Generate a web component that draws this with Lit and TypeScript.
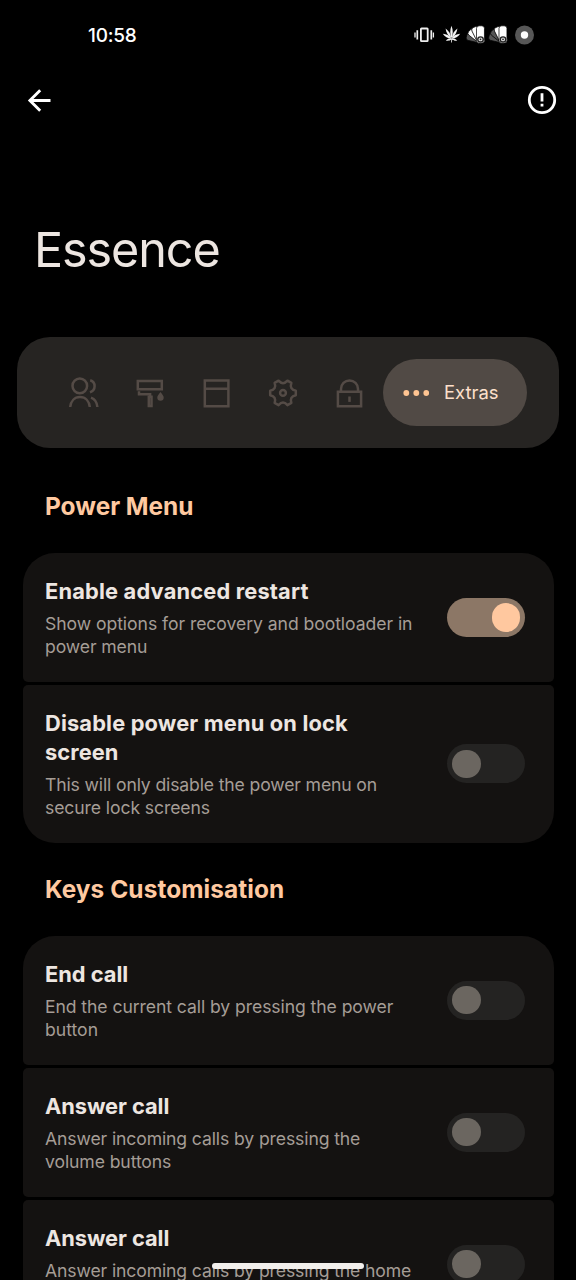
import { LitElement, html, css, svg, nothing } from "lit";
import { customElement, property } from "lit/decorators.js";

interface Line {
  text: string;
  track?: number;
}
interface Setting {
  title: Line[];
  summary: Line[];
  on?: boolean;
}
interface Section {
  heading: Line;
  items: Setting[];
}

const SECTIONS: Section[] = [
  {
    heading: { text: "Power Menu" },
    items: [
      {
        title: [{ text: "Enable advanced restart", track: 0.19 }],
        summary: [{ text: "Show options for recovery and bootloader in", track: -0.06 }, { text: "power menu", track: -0.1 }],
        on: true,
      },
      {
        title: [{ text: "Disable power menu on lock", track: 0.17 }, { text: "screen", track: 0.1 }],
        summary: [
          { text: "This will only disable the power menu on", track: -0.14 },
          { text: "secure lock screens", track: -0.1 },
        ],
      },
    ],
  },
  {
    heading: { text: "Keys Customisation", track: 0.09 },
    items: [
      {
        title: [{ text: "End call" }],
        summary: [{ text: "End the current call by pressing the power", track: -0.08 }, { text: "button" }],
      },
      {
        title: [{ text: "Answer call", track: -0.05 }],
        summary: [{ text: "Answer incoming calls by pressing the", track: -0.12 }, { text: "volume buttons", track: -0.1 }],
      },
      {
        title: [{ text: "Answer call", track: -0.05 }],
        summary: [{ text: "Answer incoming calls by pressing the home", track: -0.12 }],
      },
    ],
  },
];

const lines = (list: Line[]) =>
  list.map((l) => html`<div style="letter-spacing:${l.track ?? 0}px">${l.text}</div>`);

@customElement("toggle-switch")
export class ToggleSwitch extends LitElement {
  @property({ type: Boolean, reflect: true }) on = false;
  static styles = css`
    :host {
      display: flex;
      flex: none;
      align-items: center;
      box-sizing: border-box;
      width: 78px;
      height: 39px;
      padding: 0 5.2px;
      border-radius: 20px;
      background: #242322;
    }
    .thumb {
      width: 28.5px;
      height: 28.5px;
      border-radius: 50%;
      background: #6b6660;
    }
    :host([on]) {
      justify-content: flex-end;
      background: #8c7766;
    }
    :host([on]) .thumb {
      background: #ffc89f;
    }
  `;
  render() {
    return html`<div class="thumb"></div>`;
  }
}

@customElement("setting-card")
export class SettingCard extends LitElement {
  @property({ attribute: false }) item!: Setting;
  static styles = css`
    :host {
      display: flex;
      align-items: center;
      justify-content: space-between;
      padding: 24px 28.3px 24px 22.5px;
      background: #141211;
      white-space: nowrap;
    }
    .title {
      font-size: 21.8px;
      font-weight: 700;
      line-height: 28.5px;
      color: #ede6e1;
    }
    .summary {
      min-height: 46px;
      margin-top: 6.5px;
      font-size: 17.6px;
      line-height: 23px;
      color: #a59d96;
    }
  `;
  render() {
    return html`
      <div>
        <div class="title">${lines(this.item.title)}</div>
        <div class="summary">${lines(this.item.summary)}</div>
      </div>
      <toggle-switch ?on=${!!this.item.on}></toggle-switch>
    `;
  }
}

const blade = (angle: number, fill: string) => svg`
  <rect x="11.500" y="0" width="7.500" height="17.300" rx="2.600" fill=${fill} transform="rotate(${angle} 15.300 13.600)"/>`;

const swatchFan = (darkBlades: number) => svg`
  <g stroke="#000" stroke-width=".7">
    ${blade(-76, "#555")}
    ${blade(-50, darkBlades > 1 ? "#555" : "#fff")}
    ${blade(-25, "#fff")}
    ${blade(0, "#fff")}
  </g>
  <circle cx="15.300" cy="13.600" r="2.600" fill="#ddd" stroke="#222" stroke-width="1.300"/>
  <circle cx="15.300" cy="13.600" r="0.800" fill="#222"/>`;

const polar = (deg: number, r: number) => {
  const a = (deg * Math.PI) / 180;
  return `${(16 + r * Math.cos(a)).toFixed(2)} ${(16.9 + r * Math.sin(a)).toFixed(2)}`;
};
const GEAR =
  `M${polar(-10, 13)}` +
  [0, 60, 120, 180, 240, 300]
    .map((a) => `L${polar(a + 10, 13)}Q${polar(a + 30, 7.2)} ${polar(a + 50, 13)}`)
    .join("") +
  "z";

const TAB_ICONS = [
  svg`<circle cx="11.800" cy="9.900" r="7.300"/>
      <path d="M2.200 31C2.800 25 6.600 21 12 21s9.200 4 9.800 10"/>
      <path d="M22.200 4.200C25.200 5 26.600 7.400 26.600 10.200s-1.400 4.900-4.600 6.100"/>
      <path d="M23 21.600C26.800 23 29 26.400 29.400 31"/>`,
  svg`<path d="M3.800 5.100h24v8.200h-24z"/>
      <path d="M5 15.300v2.900H16.100V21"/>
      <path d="M14.800 20.800h2.700v9.200h-2.700z"/>
      <path d="M26.500 16c2 2.600 3.200 4 3.200 5.500a3.200 3.200 0 0 1-6.400 0c0-1.500 1.200-2.900 3.200-5.500z" fill="currentColor" stroke="none"/>`,
  svg`<path d="M3.800 4.600h23.600v25.600H3.800zM3.800 12.800h23.600"/>`,
  svg`<path stroke-linejoin="round" d=${GEAR}/>
      <circle cx="16" cy="16.900" r="2.900"/>`,
  svg`<path d="M3.900 15.800h23.200v14.400H3.900zM7 15.800V12.900a8.500 8.500 0 0 1 17 0v2.900"/>
      <path d="M15.500 20.500v5.400"/>`,
];

@customElement("app-root")
export class AppRoot extends LitElement {
  static styles = css`
    :host {
      display: block;
      position: relative;
      box-sizing: border-box;
      height: 1280px;
      overflow: hidden;
      background: #000;
      color: #ede6e1;
      font-family: Inter, "Open Sans", sans-serif;
    }
    svg {
      display: block;
      flex: none;
    }
    .status {
      display: flex;
      align-items: center;
      justify-content: space-between;
      height: 70px;
      padding: 0 42px 0 88px;
      color: #fff;
    }
    .clock {
      font-size: 19px;
      font-weight: 500;
      letter-spacing: -0.2px;
    }
    .bar {
      display: flex;
      align-items: center;
      justify-content: space-between;
      height: 60px;
      padding: 0 18px 0 25px;
    }
    h1 {
      margin: 0;
      padding: 90px 0 0 34px;
      font-size: 48.5px;
      font-weight: 400;
      line-height: 60px;
      letter-spacing: -1.1px;
    }
    .tabs {
      display: flex;
      align-items: center;
      box-sizing: border-box;
      height: 111px;
      margin: 57px 17px 0;
      padding: 0 32px 0 33.5px;
      border-radius: 33px;
      background: #262422;
      color: #544b46;
    }
    .tab {
      display: flex;
      justify-content: center;
      width: 66.5px;
    }
    .pill {
      display: flex;
      flex: 1;
      align-items: center;
      gap: 15px;
      height: 66.5px;
      padding-left: 20px;
      border-radius: 33.5px;
      background: #514a45;
      color: #fde0cb;
      font-size: 18.4px;
    }
    .label {
      margin-top: -2px;
    }
    h2 {
      margin: 0;
      height: 105px;
      padding-left: 45px;
      font-size: 24.4px;
      font-weight: 700;
      line-height: 117px;
      color: #ffc9a0;
    }
    .gap {
      height: 93px;
      line-height: 93px;
    }
    .group {
      display: flex;
      flex-direction: column;
      gap: 3px;
      padding: 0 22.5px;
    }
    setting-card {
      border-radius: 5px;
    }
    setting-card:first-child {
      border-top-left-radius: 32px;
      border-top-right-radius: 32px;
    }
    .closed setting-card:last-child {
      border-bottom-left-radius: 32px;
      border-bottom-right-radius: 32px;
    }
    .nav {
      position: absolute;
      left: 212px;
      top: 1263px;
      width: 152px;
      height: 6px;
      border-radius: 3px;
      background: #f2efec;
    }
  `;

  render() {
    return html`
      <div class="status">
        <span class="clock">10:58</span>
        <svg width="122" height="22" viewBox="0 0 122 22" fill="none">
          <g stroke="#eee">
            <rect x="8.900" y="4.500" width="6.800" height="12.600" rx="0.600" stroke-width="1.800"/>
            <path d="M5.300 6.200v9.400M19.300 6.200v9.400" stroke-width="1.700"/>
            <path d="M3 8.400v5M21.400 8.400v5" stroke-width="1.300"/>
          </g>
          <g fill="#f4f4f4">
            <path d="M39.500 1.800C41.200 6 41.100 10 39.500 14.500C37.900 10 37.800 6 39.500 1.800z"/>
            <path d="M33.600 4.400C36.800 6.800 38.600 9.600 39.300 14.300C36 11.800 34.200 8.600 33.600 4.400z"/>
            <path d="M45.400 4.400C42.200 6.800 40.400 9.600 39.700 14.300C43 11.800 44.800 8.600 45.400 4.400z"/>
            <path d="M30.800 9.800C34.400 10 37.200 11.400 39.300 14.500C35.600 14.500 32.800 13 30.800 9.800z"/>
            <path d="M48.200 9.800C44.600 10 41.800 11.400 39.700 14.500C43.400 14.500 46.200 13 48.200 9.800z"/>
            <path d="M33.800 16.400C36 14.600 37.800 14 39.500 14.400C41.200 14 43 14.600 45.200 16.400C43 17 41 16.700 39.900 15.500V18.500H39.100V15.500C38 16.700 36 17 33.800 16.400z"/>
          </g>
          <g transform="translate(52.300 1.800) scale(1.060 1)">${swatchFan(1)}</g>
          <g transform="translate(74.800 1.800) scale(1.060 1)">${swatchFan(2)}</g>
          <circle cx="112.500" cy="11" r="9.500" fill="#575757"/>
          <circle cx="112.500" cy="11" r="3.700" fill="#fff"/>
        </svg>
      </div>
      <div class="bar">
        <svg width="28" height="28" viewBox="0 0 28 28" fill="none" stroke="#fff" stroke-width="2.900">
          <path d="M25.500 14.500H5M15.200 4.200L4.900 14.500l10.300 10.300"/>
        </svg>
        <svg width="32" height="32" viewBox="0 0 32 32" fill="none" stroke="#fff" stroke-width="2.800">
          <circle cx="16" cy="16" r="12.700"/>
          <path d="M16 9.200v8.200M16 19.700v2.700"/>
        </svg>
      </div>
      <h1>Essence</h1>
      <div class="tabs">
        ${TAB_ICONS.map(
          (icon) => html`<div class="tab">
            <svg width="32" height="34" viewBox="0 0 32 34" fill="none" stroke="currentColor" stroke-width="2.500">
              ${icon}
            </svg>
          </div>`
        )}
        <div class="pill">
          <svg width="26" height="8" viewBox="0 0 26 8" fill="#ffc592">
            <circle cx="3.300" cy="4" r="2.900"/><circle cx="13.300" cy="4" r="2.900"/><circle cx="23.300" cy="4" r="2.900"/>
          </svg>
          <span class="label">Extras</span>
        </div>
      </div>
      ${SECTIONS.map(
        (s, i) => html`
          <h2 class=${i ? "gap" : nothing} style="letter-spacing:${s.heading.track ?? 0}px">${s.heading.text}</h2>
          <div class="group ${i ? "" : "closed"}">
            ${s.items.map((it) => html`<setting-card .item=${it}></setting-card>`)}
          </div>
        `
      )}
      <div class="nav"></div>
    `;
  }
}
